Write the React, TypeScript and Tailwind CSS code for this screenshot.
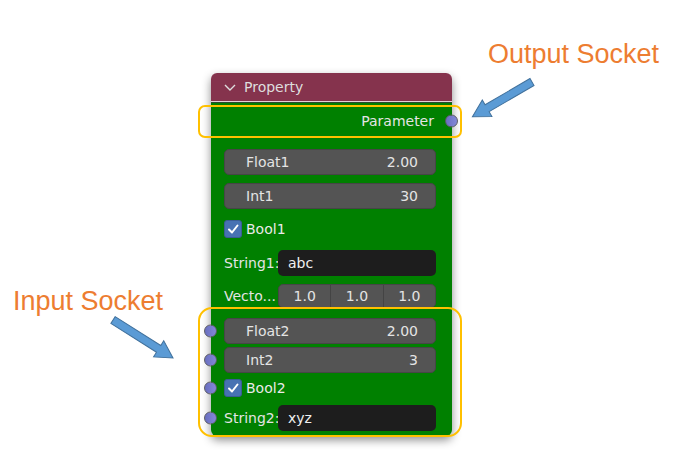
import React from 'react';

type SocketSide = 'left' | 'right';

function Socket({ side }: { side: SocketSide }) {
  return (
    <span
      className={
        side === 'left'
          ? 'absolute left-[-7px] top-1/2 -translate-y-1/2 w-[13px] h-[13px] rounded-full bg-gradient-to-r from-[#6a6fc0] to-[#8388d8] border border-[#5c5c66]'
          : 'absolute right-[-6px] top-1/2 -translate-y-1/2 w-[13px] h-[13px] rounded-full bg-gradient-to-r from-[#6a6fc0] to-[#8388d8] border border-[#5c5c66]'
      }
    />
  );
}

function Row({
  socket,
  className,
  children,
}: {
  socket?: boolean;
  className: string;
  children: React.ReactNode;
}) {
  return (
    <div className={`relative flex items-center pl-[13px] pr-[16px] ${className}`}>
      {socket && <Socket side="left" />}
      {children}
    </div>
  );
}

function NumField({ label, value }: { label: string; value: string }) {
  return (
    <div className="flex-1 h-full rounded-[5px] bg-[#545454] border border-[#464646] flex items-center justify-between pl-[21px] pr-[17px] text-[#e4e4e4]">
      <span>{label}</span>
      <span>{value}</span>
    </div>
  );
}

function Check({ label }: { label: string }) {
  return (
    <div className="flex items-center gap-[4px]">
      <span className="w-[18px] h-[18px] rounded-[3px] bg-[#4772b3] border border-[#3a5d94] flex items-center justify-center">
        <svg width="12" height="12" viewBox="0 0 12 12">
          <polyline points="2,6.5 5,9.5 10.5,2.5" fill="none" stroke="#ffffff" strokeWidth="2" strokeLinecap="round" strokeLinejoin="round" />
        </svg>
      </span>
      <span className="text-[#eaeaea]">{label}</span>
    </div>
  );
}

function StringField({ label, value }: { label: string; value: string }) {
  return (
    <>
      <span className="w-[54px] text-[#e4e4e4] whitespace-nowrap">{label}</span>
      <div className="flex-1 h-full rounded-[5px] bg-[#1d1d1d] flex items-center pl-[10px] text-[#f0f0f0]">
        {value}
      </div>
    </>
  );
}

export default function App() {
  return (
    <div className="relative w-[673px] h-[465px] bg-white overflow-hidden">
      {/* Node */}
      <div className="pt-[73px] pl-[211px]">
        <div className="w-[241px] rounded-[6px] shadow-[0_4px_10px_rgba(0,0,0,0.45)] text-[14px] leading-none font-['DejaVu_Sans',sans-serif]">
          <div className="h-[28px] rounded-t-[6px] bg-[#85334d] flex items-center pl-[12px] gap-[7px] text-[#dedede]">
            <svg width="14" height="14" viewBox="0 0 14 14">
              <polyline points="2,5 7,10 12,5" fill="none" stroke="#dedede" strokeWidth="1.4" />
            </svg>
            <span>Property</span>
          </div>
          <div className="h-px bg-[#e3d3d8]" />
          <div className="h-px bg-[#2d4a2d]" />
          <div className="bg-[#008000] rounded-b-[6px] pb-[5px]">
            <div className="relative h-[36px] flex items-center justify-end pr-[18px] text-[#e4e4e4]">
              Parameter
              <Socket side="right" />
            </div>
            <Row className="h-[26px] mt-[10px]">
              <NumField label="Float1" value="2.00" />
            </Row>
            <Row className="h-[26px] mt-[8px]">
              <NumField label="Int1" value="30" />
            </Row>
            <Row className="h-[24px] mt-[8px]">
              <Check label="Bool1" />
            </Row>
            <Row className="h-[26px] mt-[9px]">
              <StringField label="String1:" value="abc" />
            </Row>
            <Row className="h-[24px] mt-[8px]">
              <span className="w-[54px] text-[#e4e4e4] whitespace-nowrap">Vecto...</span>
              <div className="flex-1 h-full rounded-[5px] bg-[#545454] border border-[#464646] flex text-[#e4e4e4] overflow-hidden">
                <div className="flex-1 flex items-center justify-center border-r border-[#444444]">1.0</div>
                <div className="flex-1 flex items-center justify-center border-r border-[#444444]">1.0</div>
                <div className="flex-1 flex items-center justify-center">1.0</div>
              </div>
            </Row>
            <Row socket className="h-[26px] mt-[10px]">
              <NumField label="Float2" value="2.00" />
            </Row>
            <Row socket className="h-[26px] mt-[3px]">
              <NumField label="Int2" value="3" />
            </Row>
            <Row socket className="h-[24px] mt-[3px]">
              <Check label="Bool2" />
            </Row>
            <Row socket className="h-[26px] mt-[5px]">
              <StringField label="String2:" value="xyz" />
            </Row>
          </div>
        </div>
      </div>

      {/* Annotation overlays */}
      <div className="absolute left-[198px] top-[105px] w-[264px] h-[33px] rounded-[7px] border-2 border-[#ffc000]" />
      <div className="absolute left-[198px] top-[307px] w-[264px] h-[130px] rounded-[14px] border-2 border-[#ffc000]" />

      <div className="absolute left-[488px] top-[41px] text-[27px] leading-none text-[#ed7d31] font-['Liberation_Sans',Arial,sans-serif] whitespace-nowrap">
        Output Socket
      </div>
      <div className="absolute left-[13px] top-[288px] text-[27px] leading-none text-[#ed7d31] font-['Liberation_Sans',Arial,sans-serif] whitespace-nowrap">
        Input Socket
      </div>

      <svg className="absolute inset-0" width="673" height="465" viewBox="0 0 673 465">
        <g transform="translate(532 82) rotate(149.7)">
          <polygon points="0,-4 52,-4 52,-9.5 69,0 52,9.5 52,4 0,4" fill="#5b9bd5" stroke="#41719c" strokeWidth="1" />
        </g>
        <g transform="translate(113 320) rotate(32.3)">
          <polygon points="0,-4 54,-4 54,-9.5 71,0 54,9.5 54,4 0,4" fill="#5b9bd5" stroke="#41719c" strokeWidth="1" />
        </g>
      </svg>
    </div>
  );
}
